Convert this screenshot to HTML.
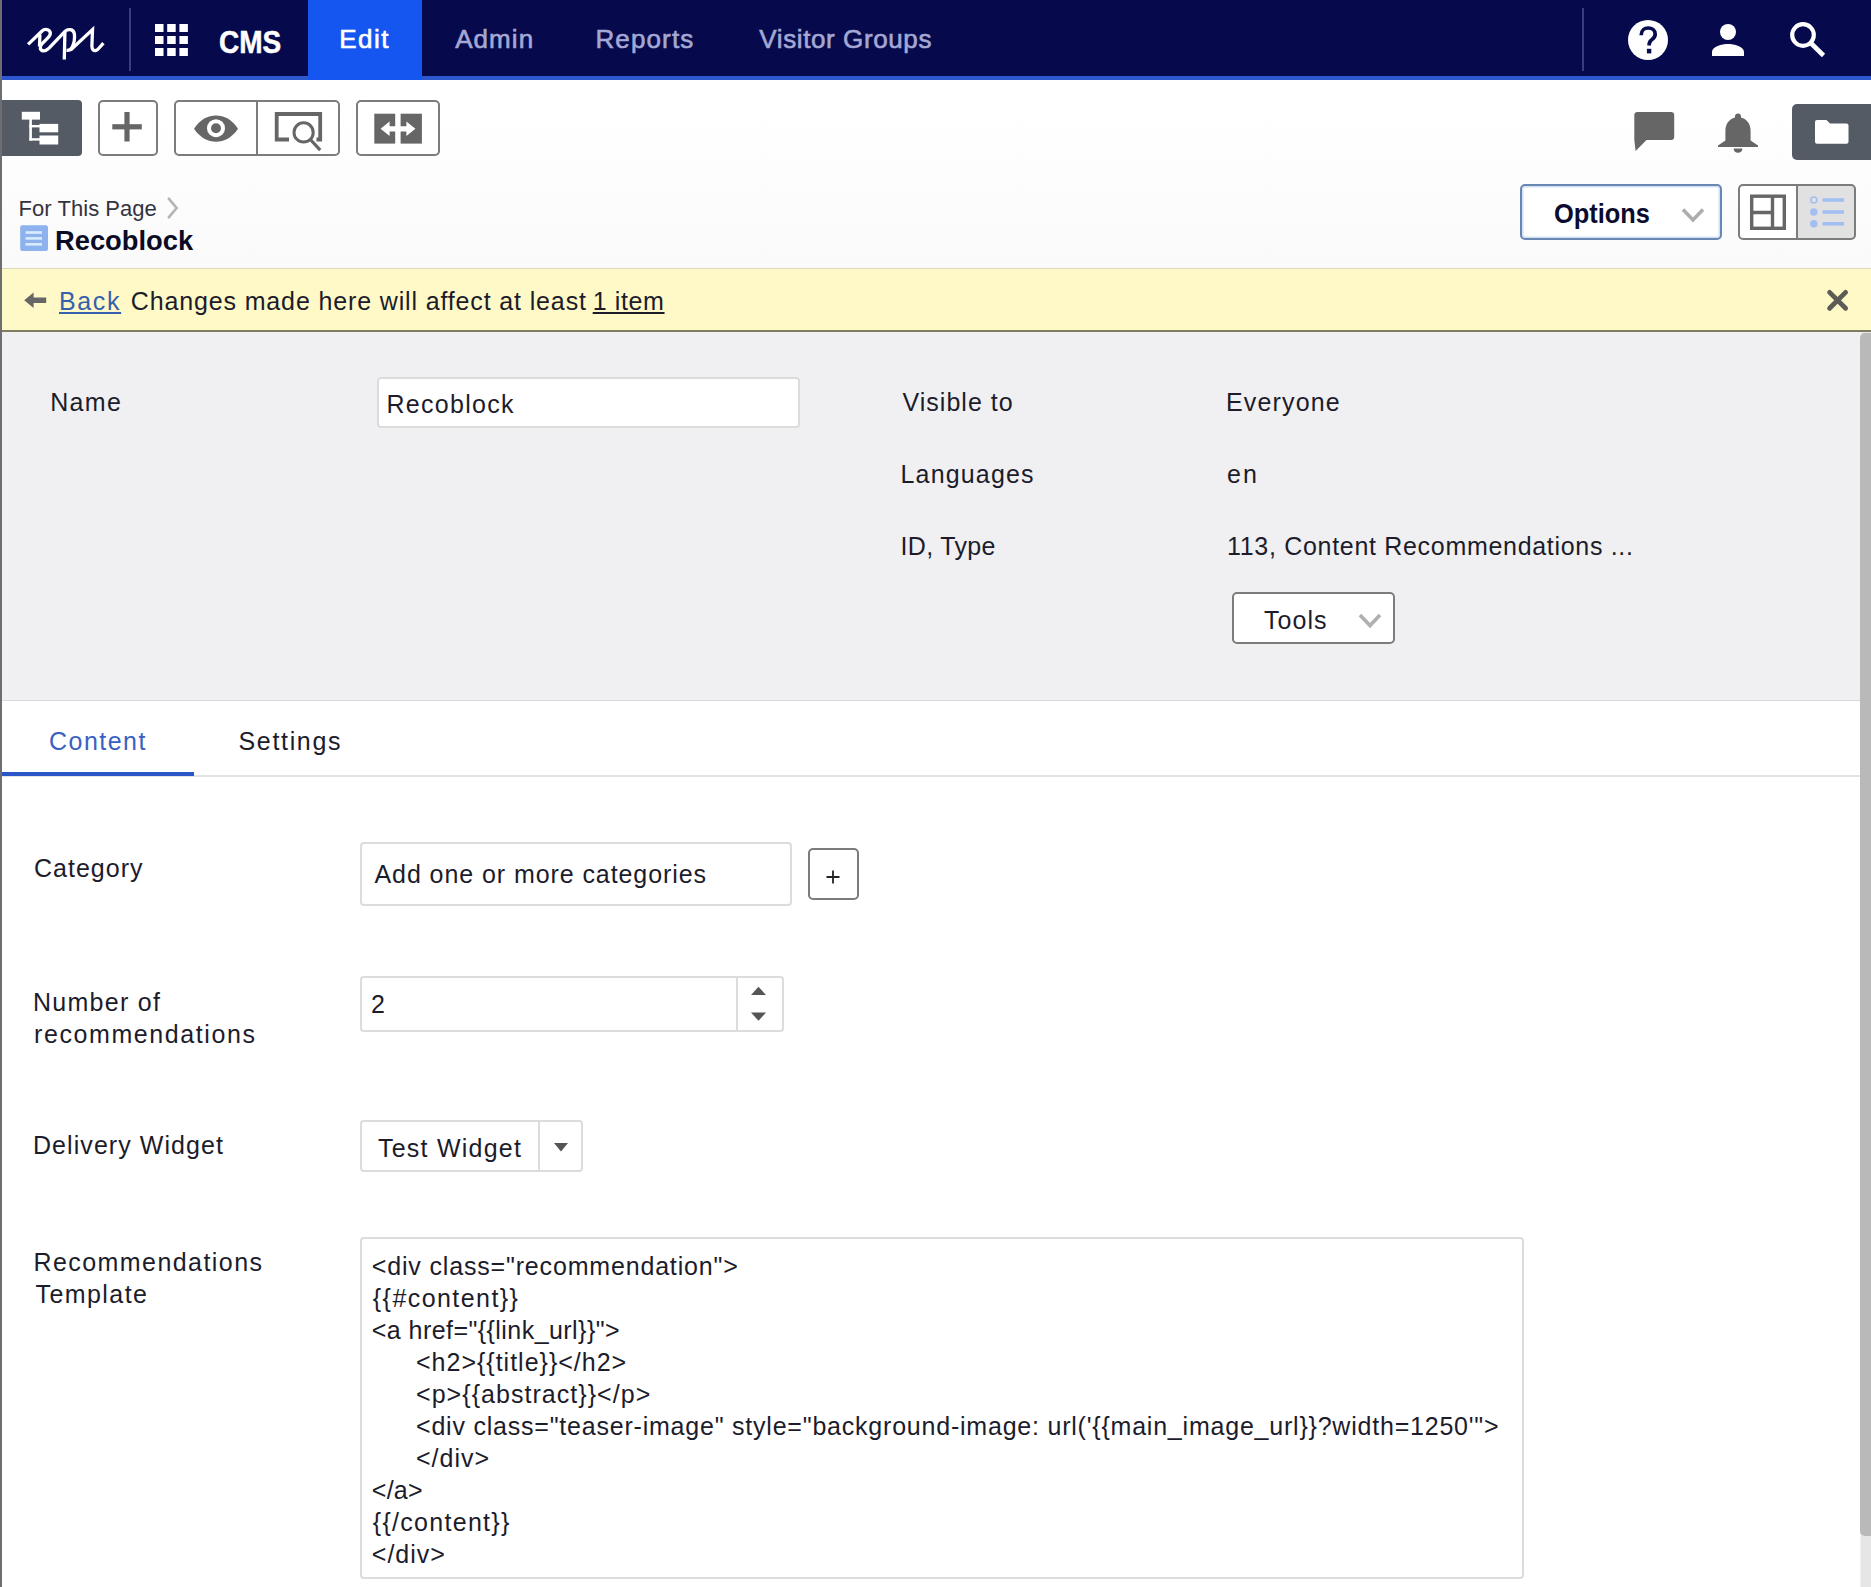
<!DOCTYPE html>
<html lang="en">
<head>
<meta charset="utf-8">
<title>Recoblock - CMS</title>
<style>
*{box-sizing:border-box;margin:0;padding:0}
html,body{width:1871px;height:1587px;overflow:hidden;background:#fff}
body{position:relative;font-family:"Liberation Sans",sans-serif;font-size:25px;color:#1c1c2b;line-height:32px}
.abs{position:absolute}
.t{position:absolute;white-space:nowrap;line-height:32px;transform-origin:0 50%}
svg{position:absolute;overflow:visible}
/* header */
#hdr{left:0;top:0;width:1871px;height:75.5px;background:#060a4c}
#hline{left:0;top:75.5px;width:1871px;height:4.3px;background:#2c57cf}
#edittab{left:308.3px;top:0;width:113.7px;height:79.6px;background:#1556f0}
.sep{width:2px;top:8px;height:63px;background:#3a3f7c}
.nav{font-size:26px;color:#b3b7de;-webkit-text-stroke:0.5px currentColor;top:23px}
/* toolbar */
#tb{left:0;top:80px;width:1871px;height:189px;background:linear-gradient(#fff 0,#fff 15%,#fafafa 100%)}
.btn{border:2px solid #7c7c7c;border-radius:5px;background:#fff}
.dark{background:#555b65}
#leftedge{left:0;top:0;width:2px;height:1587px;background:#6d6d72}
/* notification */
#note{left:2px;top:268px;width:1869px;height:64px;background:#fef9c6;border-top:1px solid #dcd8bc;border-bottom:2px solid #7f7c60}
/* panel */
#panel{left:2px;top:332px;width:1858px;height:369px;background:#f0f0f2;border-bottom:1px solid #d9d9db}
.inp{background:#fff;border:2px solid #dcdcdc;border-radius:4px}
#tabline{left:2px;top:775px;width:1858px;height:2px;background:#e3e3e3}
#tabsel{left:2px;top:772px;width:192px;height:4px;background:#2a56c8}
#sbtrack{left:1860px;top:332px;width:11px;height:1255px;background:#e6e6e6;border-left:1px solid #f0f0f0}
#sbthumb{left:1860px;top:332.5px;width:12px;height:1203.5px;background:#b9b9b9;border-radius:5px 0 0 5px}
.code{font-size:25px}
</style>
</head>
<body>
<!--HEADER-->
<div id="hdr" class="abs"></div>
<div id="hline" class="abs"></div>
<div id="edittab" class="abs"></div>
<div class="abs sep" style="left:129px"></div>
<div class="abs sep" style="left:1582px"></div>
<svg style="left:15px;top:15px" width="110" height="55" viewBox="15 15 110 55" fill="none" stroke="#fff" stroke-width="3.3" stroke-linejoin="round"><path d="M28.1,44.4 L41.8,31.2 C44.6,28.5 49.6,29 50.3,32.6 C50.7,34.8 49.4,36.4 47.6,38.2 L42.4,43.4 C39.2,46.6 39.6,50.4 43.6,50.8 C45.8,51 47.4,49.8 49,48.2 L65,31.4 C67.6,28.8 73.6,28.4 74.4,34 C74.9,38 74,43.5 72,47.5 C70.8,49.8 69.5,50.6 66.5,50.4"/><path d="M64.9,31.6 L64.3,59.5"/><path d="M39.9,34.5 L39.5,46.5"/><path d="M70.6,50 L92.5,29.6 L91.9,46 C91.8,49.8 94,51.2 96.2,50.4 C97.8,49.8 98.6,48.6 100,47 L103.4,43.1" stroke-linejoin="miter"/></svg>
<svg style="left:155px;top:24px" width="33" height="32" viewBox="0 0 33 32" fill="#fff"><rect x="0" y="0" width="8.5" height="8"/><rect x="12.2" y="0" width="8.5" height="8"/><rect x="24.4" y="0" width="8.5" height="8"/><rect x="0" y="12" width="8.5" height="8"/><rect x="12.2" y="12" width="8.5" height="8"/><rect x="24.4" y="12" width="8.5" height="8"/><rect x="0" y="24" width="8.5" height="8"/><rect x="12.2" y="24" width="8.5" height="8"/><rect x="24.4" y="24" width="8.5" height="8"/></svg>
<!-- help -->
<svg style="left:1628px;top:20px" width="40" height="40" viewBox="0 0 40 40"><circle cx="20" cy="20" r="20" fill="#fff"/><path d="M13.2,15.2 C13.2,10.4 16.4,8 20.2,8 C24.2,8 27.2,10.6 27.2,14.2 C27.2,17.4 25,18.8 23.2,20.2 C21.7,21.4 21.1,22.6 21.1,25.4" fill="none" stroke="#070b4f" stroke-width="3.7"/><rect x="18.9" y="28.8" width="4.4" height="4.6" fill="#070b4f"/></svg>
<!-- person -->
<svg style="left:1712px;top:24px" width="32" height="32" viewBox="0 0 32 32" fill="#fff"><circle cx="16" cy="8" r="8"/><path d="M0,32 L0,28 C0,22.5 10,20 16,20 C22,20 32,22.5 32,28 L32,32 Z"/></svg>
<!-- search -->
<svg style="left:1788px;top:21px" width="38" height="37" viewBox="0 0 38 37" fill="none" stroke="#fff"><circle cx="15" cy="14" r="10.8" stroke-width="4.2"/><path d="M22.8,22 L35.5,34.5" stroke-width="4.6"/></svg>
<!--TOOLBAR-->
<div id="tb" class="abs"></div>
<!-- tree btn -->
<div class="abs dark" style="left:2px;top:100px;width:80px;height:56px;border-radius:0 4px 4px 0"></div>
<svg style="left:20px;top:110px" width="40" height="36" viewBox="20 110 40 36"><g fill="#fff"><rect x="21.8" y="111.8" width="18.2" height="7.8"/><rect x="39.5" y="123.9" width="18.7" height="8.4"/><rect x="39.5" y="135.5" width="18.7" height="9"/><rect x="29.3" y="119" width="2.6" height="21.5"/><rect x="29.3" y="125" width="11" height="2.4"/><rect x="29.3" y="138.2" width="11" height="2.4"/></g></svg>
<!-- plus btn -->
<div class="abs btn" style="left:98px;top:100px;width:60px;height:56px"></div>
<svg style="left:110px;top:110px" width="34" height="34" viewBox="110 110 34 34"><g fill="#666"><rect x="124.4" y="112" width="5.2" height="29.5"/><rect x="112.3" y="124.2" width="29.5" height="5.2"/></g></svg>
<!-- eye / preview group -->
<div class="abs btn" style="left:174px;top:100px;width:166px;height:56px"></div>
<div class="abs" style="left:256px;top:100px;width:2px;height:56px;background:#7c7c7c"></div>
<svg style="left:192px;top:112px" width="48" height="34" viewBox="192 112 48 34"><path d="M194,128.7 C200,119.5 208,115.6 216,115.6 C224,115.6 232,119.5 238,128.7 C232,137.8 224,141.7 216,141.7 C208,141.7 200,137.8 194,128.7 Z" fill="#666"/><circle cx="216" cy="128.2" r="9" fill="#fff"/><circle cx="216" cy="128.2" r="5" fill="#666"/></svg>
<svg style="left:272px;top:110px" width="52" height="44" viewBox="272 110 52 44" fill="none" stroke="#666"><path d="M289,139.5 L276.7,139.5 L276.7,114 L320.2,114 L320.2,139.5 L316.5,139.5" stroke-width="3.8"/><circle cx="303.6" cy="132.4" r="9.6" stroke-width="3" fill="#fff"/><path d="M310.8,140 L320.2,150.2" stroke-width="3.2"/></svg>
<!-- compare btn -->
<div class="abs btn" style="left:356px;top:100px;width:84px;height:56px"></div>
<svg style="left:372px;top:112px" width="52" height="34" viewBox="372 112 52 34"><rect x="374.3" y="113.7" width="20.9" height="29.9" fill="#666"/><rect x="400.6" y="113.7" width="21.3" height="29.9" fill="#666"/><path d="M380.6,128.8 L389.6,121.6 L389.6,126.2 L406.4,126.2 L406.4,121.6 L415.4,128.8 L406.4,136 L406.4,131.6 L389.6,131.6 L389.6,136 Z" fill="#fff"/></svg>
<!-- chat -->
<svg style="left:1632px;top:110px" width="44" height="44" viewBox="1632 110 44 44"><path d="M1637.5,112 L1671,112 Q1674.2,112 1674.2,115.2 L1674.2,136.8 Q1674.2,140 1671,140 L1646.5,140 L1635.6,151 L1634.3,140 L1634.3,115.2 Q1634.3,112 1637.5,112 Z" fill="#666"/></svg>
<!-- bell -->
<svg style="left:1716px;top:112px" width="44" height="42" viewBox="1716 112 44 42" fill="#666"><path d="M1738,113.6 C1739.8,113.6 1741,114.8 1741,116.6 L1741,117.6 C1747,119.2 1750.6,124.2 1750.6,131 L1750.6,140.5 L1758,145.6 L1758,147 L1718,147 L1718,145.6 L1725.4,140.5 L1725.4,131 C1725.4,124.2 1729,119.2 1735,117.6 L1735,116.6 C1735,114.8 1736.2,113.6 1738,113.6 Z"/><path d="M1733.6,148.4 L1742.4,148.4 C1742.4,151 1740.4,152.8 1738,152.8 C1735.6,152.8 1733.6,151 1733.6,148.4 Z"/></svg>
<!-- folder btn -->
<div class="abs dark" style="left:1792px;top:104px;width:79px;height:56px;border-radius:5px 0 0 5px"></div>
<svg style="left:1814px;top:118px" width="36" height="28" viewBox="1814 118 36 28"><path d="M1817,120 L1826.5,120 L1830,123.6 L1846.5,123.6 Q1848.5,123.6 1848.5,125.6 L1848.5,141.8 Q1848.5,143.8 1846.5,143.8 L1817,143.8 Q1815,143.8 1815,141.8 L1815,122 Q1815,120 1817,120 Z" fill="#fff"/></svg>
<!-- breadcrumb chevron -->
<svg style="left:165px;top:195px" width="16" height="26" viewBox="165 195 16 26" fill="none" stroke="#b4b4b4" stroke-width="2.6"><path d="M168.2,197.8 L176.6,208 L168.2,218.2"/></svg>
<!-- block icon -->
<svg style="left:20px;top:225px" width="28" height="26" viewBox="0 0 28 26"><rect x="0.2" y="0.3" width="27.8" height="25.7" rx="2" fill="#8db2ee"/><g fill="#d9ebff"><rect x="5.5" y="6.2" width="16.5" height="2.6"/><rect x="5.5" y="12.1" width="16.5" height="2.6"/><rect x="5.5" y="18" width="16.5" height="2.6"/></g></svg>
<!-- options btn -->
<div class="abs" style="left:1520px;top:184px;width:202px;height:56px;border:2px solid #6787b4;border-radius:5px;background:#fff;box-shadow:inset 0 0 0 1.5px #d5e0f0"></div>
<svg style="left:1680px;top:206px" width="26" height="18" viewBox="1680 206 26 18" fill="none" stroke="#adadad" stroke-width="3.6"><path d="M1683,209.5 L1693,220 L1703,209.5"/></svg>
<!-- view toggle -->
<div class="abs btn" style="left:1738px;top:184px;width:118px;height:56px;background:linear-gradient(90deg,#fff 0,#fff 58px,#e1e1e1 58px)"></div>
<div class="abs" style="left:1796px;top:184px;width:2px;height:56px;background:#7c7c7c"></div>
<svg style="left:1748px;top:192px" width="40" height="40" viewBox="1748 192 40 40" fill="none" stroke="#666" stroke-width="3.4"><rect x="1751.7" y="196.2" width="32.6" height="32.1"/><path d="M1772.5,196 L1772.5,228.5 M1751.7,212.5 L1772.5,212.5"/></svg>
<svg style="left:1808px;top:194px" width="40" height="36" viewBox="1808 194 40 36"><g fill="#a3bff2"><circle cx="1813.8" cy="212" r="3.8"/><circle cx="1813.8" cy="223.8" r="3.8"/><rect x="1822.5" y="198.2" width="21.5" height="3.6"/><rect x="1822.5" y="210.2" width="21.5" height="3.6"/><rect x="1822.5" y="222" width="21.5" height="3.6"/></g><circle cx="1813.8" cy="200" r="3" fill="none" stroke="#a3bff2" stroke-width="1.5"/></svg>
<!--NOTE-->
<div id="note" class="abs"></div>
<svg style="left:22px;top:290px" width="28" height="20" viewBox="22 290 28 20"><path d="M24.2,300.2 L33.6,292.4 L33.6,297.6 L46.2,297.6 L46.2,303 L33.6,303 L33.6,308 Z" fill="#666"/></svg>
<svg style="left:1825px;top:288px" width="26" height="26" viewBox="1825 288 26 26" fill="none" stroke="#5c5b55" stroke-width="4.8" stroke-linecap="round"><path d="M1829.6,292.4 L1845.6,308.2 M1845.6,292.4 L1829.6,308.2"/></svg>
<!--PANEL-->
<div id="panel" class="abs"></div>
<div class="abs inp" style="left:376.5px;top:376.5px;width:423px;height:51px"></div>
<div class="abs btn" style="left:1232px;top:592px;width:163px;height:52px;border-radius:5px"></div>
<svg style="left:1356px;top:610px" width="28" height="20" viewBox="1356 610 28 20" fill="none" stroke="#b0b0b0" stroke-width="3.6"><path d="M1360,615 L1370,625.6 L1380,615"/></svg>
<!--TABS-->
<div id="tabline" class="abs"></div>
<div id="tabsel" class="abs"></div>
<!--FORM-->
<div class="abs inp" style="left:360px;top:842px;width:432px;height:63.5px"></div>
<div class="abs btn" style="left:808px;top:848px;width:51px;height:52px"></div>
<svg style="left:825px;top:869px" width="16" height="16" viewBox="0 0 16 16"><path d="M8,1.5 L8,14.5 M1.5,8 L14.5,8" stroke="#222" stroke-width="1.8" fill="none"/></svg>
<div class="abs inp" style="left:360px;top:976px;width:423.5px;height:55.5px"></div>
<div class="abs" style="left:736px;top:977px;width:2px;height:54px;background:#dcdcdc"></div>
<svg style="left:750px;top:985px" width="18" height="38" viewBox="750 985 18 38" fill="#555"><path d="M751,995 L758.5,986.8 L766,995 Z"/><path d="M751,1012.5 L758.5,1020.8 L766,1012.5 Z"/></svg>
<div class="abs inp" style="left:360px;top:1120px;width:223px;height:52px"></div>
<div class="abs" style="left:538px;top:1121px;width:2px;height:50px;background:#dcdcdc"></div>
<svg style="left:552px;top:1141px" width="18" height="12" viewBox="552 1141 18 12" fill="#555"><path d="M554,1143 L568,1143 L561,1151.6 Z"/></svg>
<div class="abs inp" style="left:360px;top:1236.5px;width:1164px;height:342px"></div>
<span class="t" id="cms" style="left:219.08px;top:25.50px;font-size:30.5px;transform:scaleX(0.9182);font-weight:bold;color:#fff;-webkit-text-stroke:0.5px #fff">CMS</span>
<span class="t" id="n1" style="left:339.30px;top:23.30px;font-size:26px;letter-spacing:1.441px;color:#fff;-webkit-text-stroke:0.6px #fff">Edit</span>
<span class="t" id="n2" style="left:455.20px;top:23.30px;font-size:26px;letter-spacing:1.066px;color:#a5a8d4;-webkit-text-stroke:0.6px #a5a8d4">Admin</span>
<span class="t" id="n3" style="left:595.40px;top:23.30px;font-size:26px;letter-spacing:1.144px;color:#a5a8d4;-webkit-text-stroke:0.6px #a5a8d4">Reports</span>
<span class="t" id="n4" style="left:759.30px;top:23.30px;font-size:26px;letter-spacing:0.604px;color:#a5a8d4;-webkit-text-stroke:0.6px #a5a8d4">Visitor Groups</span>
<span class="t" id="bc1" style="left:18.60px;top:192.65px;font-size:22px;letter-spacing:0.039px;color:#33333f">For This Page</span>
<span class="t" id="bc2" style="left:55.04px;top:223.90px;font-size:28.4px;transform:scaleX(0.9616);font-weight:bold;color:#0b0b26">Recoblock</span>
<span class="t" id="opt" style="left:1554.06px;top:198.00px;font-size:27px;transform:scaleX(0.9403);font-weight:bold;color:#0b0b30">Options</span>
<span class="t" id="back" style="left:59.00px;top:285.00px;font-size:25px;letter-spacing:1.640px;color:#3560ad;text-decoration:underline">Back</span>
<span class="t" id="chg" style="left:130.80px;top:285.00px;font-size:25px;letter-spacing:0.858px;">Changes made here will affect at least</span>
<span class="t" id="item" style="left:592.70px;top:285.00px;font-size:25px;letter-spacing:0.629px;text-decoration:underline">1 item</span>
<span class="t" id="name" style="left:50.20px;top:385.75px;font-size:25px;letter-spacing:1.339px;">Name</span>
<span class="t" id="nameval" style="left:386.50px;top:388.00px;font-size:25px;letter-spacing:1.285px;">Recoblock</span>
<span class="t" id="vis" style="left:902.50px;top:385.75px;font-size:25px;letter-spacing:1.018px;">Visible to</span>
<span class="t" id="every" style="left:1226.00px;top:385.75px;font-size:25px;letter-spacing:1.148px;">Everyone</span>
<span class="t" id="lang" style="left:900.50px;top:457.75px;font-size:25px;letter-spacing:1.159px;">Languages</span>
<span class="t" id="en" style="left:1227.00px;top:457.75px;font-size:25px;letter-spacing:2.096px;">en</span>
<span class="t" id="idt" style="left:900.50px;top:529.75px;font-size:25px;letter-spacing:0.330px;">ID, Type</span>
<span class="t" id="idv" style="left:1227.00px;top:529.75px;font-size:25px;letter-spacing:0.693px;">113, Content Recommendations ...</span>
<span class="t" id="tools" style="left:1264.00px;top:603.50px;font-size:25px;letter-spacing:1.035px;">Tools</span>
<span class="t" id="tab1" style="left:49.00px;top:724.50px;font-size:25px;letter-spacing:1.481px;color:#3a60c2">Content</span>
<span class="t" id="tab2" style="left:238.50px;top:724.50px;font-size:25px;letter-spacing:1.667px;">Settings</span>
<span class="t" id="cat" style="left:34.00px;top:852.00px;font-size:25px;letter-spacing:1.009px;">Category</span>
<span class="t" id="addcat" style="left:374.50px;top:857.50px;font-size:25px;letter-spacing:0.920px;">Add one or more categories</span>
<span class="t" id="num1" style="left:33.00px;top:985.75px;font-size:25px;letter-spacing:1.279px;">Number of</span>
<span class="t" id="num2" style="left:34.00px;top:1017.50px;font-size:25px;letter-spacing:1.592px;">recommendations</span>
<span class="t" id="two" style="left:371.00px;top:987.50px;font-size:25px;letter-spacing:0.000px;">2</span>
<span class="t" id="dw" style="left:33.00px;top:1129.30px;font-size:25px;letter-spacing:1.064px;">Delivery Widget</span>
<span class="t" id="tw" style="left:378.00px;top:1131.70px;font-size:25px;letter-spacing:1.234px;">Test Widget</span>
<span class="t" id="rt1" style="left:33.50px;top:1245.75px;font-size:25px;letter-spacing:1.433px;">Recommendations</span>
<span class="t" id="rt2" style="left:35.50px;top:1277.50px;font-size:25px;letter-spacing:1.423px;">Template</span>
<span class="t" id="c1" style="left:371.80px;top:1250.20px;font-size:25px;letter-spacing:0.829px;">&lt;div class="recommendation"&gt;</span>
<span class="t" id="c2" style="left:372.80px;top:1282.20px;font-size:25px;letter-spacing:1.440px;">{{#content}}</span>
<span class="t" id="c3" style="left:371.80px;top:1314.20px;font-size:25px;letter-spacing:0.442px;">&lt;a href="{{link_url}}"&gt;</span>
<span class="t" id="c4" style="left:416.00px;top:1346.20px;font-size:25px;letter-spacing:0.996px;">&lt;h2&gt;{{title}}&lt;/h2&gt;</span>
<span class="t" id="c5" style="left:416.00px;top:1378.20px;font-size:25px;letter-spacing:1.046px;">&lt;p&gt;{{abstract}}&lt;/p&gt;</span>
<span class="t" id="c6" style="left:416.00px;top:1410.20px;font-size:25px;letter-spacing:0.784px;">&lt;div class="teaser-image" style="background-image: url('{{main_image_url}}?width=1250'"&gt;</span>
<span class="t" id="c7" style="left:416.00px;top:1442.20px;font-size:25px;letter-spacing:0.979px;">&lt;/div&gt;</span>
<span class="t" id="c8" style="left:371.80px;top:1474.20px;font-size:25px;letter-spacing:0.250px;">&lt;/a&gt;</span>
<span class="t" id="c9" style="left:372.80px;top:1506.20px;font-size:25px;letter-spacing:1.291px;">{{/content}}</span>
<span class="t" id="c10" style="left:371.80px;top:1538.20px;font-size:25px;letter-spacing:0.979px;">&lt;/div&gt;</span>
<!--SCROLL-->
<div id="sbtrack" class="abs"></div>
<div id="sbthumb" class="abs"></div>
<div id="leftedge" class="abs"></div>
</body>
</html>
